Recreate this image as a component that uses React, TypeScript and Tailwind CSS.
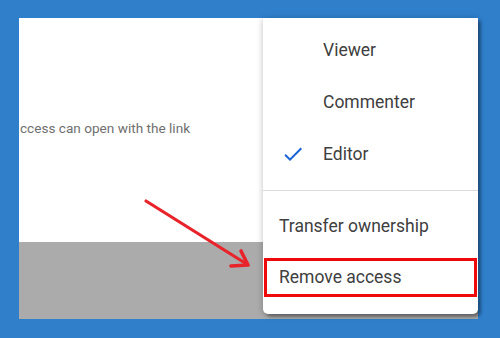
import React from "react"

const font = { fontFamily: "Roboto, 'Noto Sans', Arial, sans-serif" }

function MenuItem({ label, checked, indent }: { label: string; checked?: boolean; indent?: boolean }) {
  return (
    <div className="h-[52px] flex items-center pl-[20px]">
      {indent && (
        <div className="w-[40px] flex items-center">
          {checked && (
            <svg viewBox="0 0 24 24" className="w-[24px] h-[24px] -ml-[2px]" fill="#1a63d6">
              <path d="M9 16.17L4.83 12l-1.42 1.41L9 19 21 7l-1.41-1.41z" />
            </svg>
          )}
        </div>
      )}
      <span className="text-[17.5px] text-[#404040]">{label}</span>
    </div>
  )
}

export default function App() {
  return (
    <div className="w-[500px] h-[338px] bg-[#2f7fcb] pt-[18px] pl-[19px] overflow-hidden" style={font}>
      <div className="relative w-[459px] h-[301px] flex flex-col">
        {/* Dialog behind */}
        <div className="h-[224px] bg-white pt-[100px]">
          <p className="text-[13.6px] text-[#707070] pl-[1px]">ccess can open with the link</p>
        </div>
        <div className="flex-1 bg-[#ababab]" />

        {/* Red pointer arrow */}
        <svg className="absolute left-0 top-0 w-[459px] h-[301px] pointer-events-none" viewBox="0 0 459 301">
          <line x1="127" y1="183" x2="226" y2="245" stroke="#e8232a" strokeWidth="3.2" strokeLinecap="round" />
          <path d="M212 248 L229 247 L222 233" fill="none" stroke="#e8232a" strokeWidth="3.6" strokeLinecap="round" strokeLinejoin="round" />
        </svg>

        {/* Sharing role menu */}
        <div className="absolute right-0 top-0 w-[215px] h-[296px] bg-white rounded-b-[5px] shadow-[0_1px_6px_rgba(0,0,0,0.25),3px_3px_3px_rgba(0,0,0,0.3)] pt-[6px]">
          <MenuItem label="Viewer" indent />
          <MenuItem label="Commenter" indent />
          <MenuItem label="Editor" indent checked />
          <div className="mt-[10px] h-px bg-[#dadada]" />
          <div className="pt-[9px]">
            <div className="h-[52px] flex items-center pl-[16px]">
              <span className="text-[17.5px] text-[#404040]">Transfer ownership</span>
            </div>
          </div>
          <div className="mt-[6px] ml-[1px] mr-[1px] h-[39px] border-[3px] border-[#ee0a0a] flex items-center pl-[12px]">
            <span className="text-[17.5px] text-[#404040]">Remove access</span>
          </div>
        </div>
      </div>
    </div>
  )
}
